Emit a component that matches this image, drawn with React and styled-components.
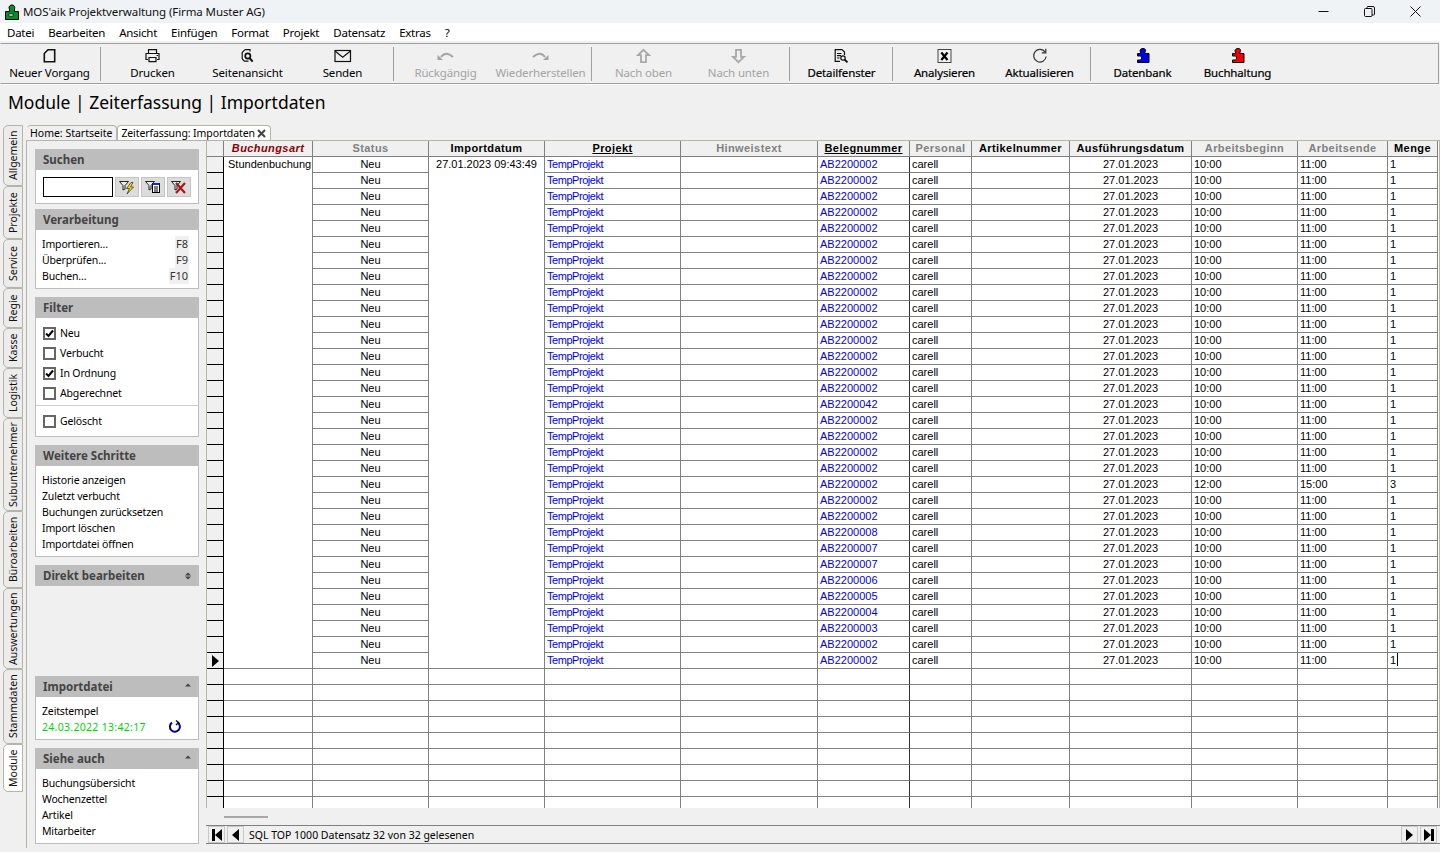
import React from 'react';
import styled, { createGlobalStyle } from 'styled-components';

const UI_FONT = '"Noto Sans", "Open Sans", sans-serif';
const GRID_FONT = '"Liberation Sans", Arial, sans-serif';

const GlobalStyle = createGlobalStyle`
  html, body { margin: 0; padding: 0; height: 100%; overflow: hidden; }
  body { background: #f0f0f0; font-family: ${UI_FONT}; color: #000; }
  #root { height: 100%; }
`;

const Win = styled.div`
  height: 852px;
  display: flex;
  flex-direction: column;
  overflow: hidden;
`;

const TitleBar = styled.div`
  height: 23px;
  flex: none;
  background: #eff3f5;
  display: flex;
  align-items: center;
  padding-left: 4px;
  font-size: 11.5px;
  letter-spacing: -0.1px;
  color: #111;
`;

const AppName = styled.span`
  margin-left: 3px;
  flex: 1;
`;

const WinButtons = styled.div`
  display: flex;
  height: 100%;
  margin-right: 2px;
`;

const WinButton = styled.div`
  width: 46px;
  display: flex;
  align-items: center;
  justify-content: center;
`;

const MenuBar = styled.div`
  height: 18px;
  flex: none;
  background: #fff;
  display: flex;
  align-items: center;
  padding-left: 7px;
  gap: 14px;
  font-size: 11.5px;
  letter-spacing: -0.25px;
  margin-bottom: 2px;
`;

const Toolbar = styled.div`
  height: 39px;
  flex: none;
  display: flex;
  align-items: stretch;
  border: 1px solid #a0a0a0;
  border-left-color: #f0f0f0;
  padding-left: 1px;
  box-shadow: 0 1px 0 #fff;
  margin-right: 1px;
`;

const ToolButton = styled.div`
  width: 95px;
  flex: none;
  display: flex;
  flex-direction: column;
  align-items: center;
  padding-top: 3px;
  font-size: 11.5px;
  line-height: 16px;
  letter-spacing: -0.15px;
  color: ${p => (p.$off ? '#a3a3a3' : '#000')};
  white-space: nowrap;
  -webkit-text-stroke: ${p => (p.$strong ? '0.2px #000' : '0')};
`;

const ToolIcon = styled.div`
  height: 18px;
  display: flex;
  align-items: flex-start;
`;

const ToolSep = styled.div`
  width: 1px;
  flex: none;
  margin: 3px 4px 2px 3px;
  background: #a0a0a0;
`;

const PageTitle = styled.h1`
  height: 41px;
  flex: none;
  margin: 0;
  padding: 5px 0 0 8px;
  box-sizing: border-box;
  font-weight: 400;
  font-size: 17.5px;
  line-height: 27px;
`;

const Main = styled.div`
  flex: 1;
  min-height: 0;
  display: flex;
`;

const Rail = styled.div`
  width: 23px;
  flex: none;
  display: flex;
  flex-direction: column;
  align-items: flex-end;
`;

const RailTab = styled.div`
  width: 20px;
  height: ${p => p.$h}px;
  box-sizing: border-box;
  writing-mode: vertical-rl;
  transform: rotate(180deg);
  display: flex;
  align-items: center;
  justify-content: center;
  font-size: 10.5px;
  background: ${p => (p.$active ? '#fff' : '#ececec')};
  border: 1px solid #b4b4a8;
  border-radius: 0 5px 5px 0;
  color: #111;
`;

const Work = styled.div`
  flex: 1;
  min-width: 0;
  display: flex;
  flex-direction: column;
  margin-left: 3px;
`;

const DocTabs = styled.div`
  height: 15px;
  flex: none;
  display: flex;
  align-items: flex-end;
  padding-left: 1px;
`;

const DocTab = styled.div`
  height: 15px;
  box-sizing: border-box;
  padding: ${p => (p.$active ? '0 4px 0 3px' : '0 4px 0 3px')};
  display: flex;
  align-items: center;
  gap: 2px;
  font-size: 10.5px;
  letter-spacing: ${p => (p.$active ? '-0.1px' : '0')};
  background: ${p => (p.$active ? '#fff' : '#f0f0f0')};
  border: 1px solid #b4b4a8;
  border-bottom: none;
  border-left-width: ${p => (p.$active ? 1 : 0)}px;
  border-radius: 4px 4px 0 0;
`;

const Pane = styled.div`
  flex: 1;
  min-height: 0;
  display: flex;
  border-top: 1px solid #b4b4a8;
  border-left: 1px solid #b4b4a8;
  margin-bottom: 4px;
`;

const Side = styled.div`
  width: 180px;
  flex: none;
  box-sizing: border-box;
  padding: 8px 8px 4px 8px;
  display: flex;
  flex-direction: column;
  gap: 8px;
`;

const SideGap = styled.div`
  flex: 1;
`;

const Panel = styled.section`
  width: 164px;
  margin-bottom: ${p => (p.$tight ? -3 : 0)}px;
`;

const PanelHead = styled.div`
  height: 21px;
  box-sizing: border-box;
  background: #bdbdbd;
  color: #444;
  font-weight: 700;
  font-size: 11.5px;
  padding: 0 8px;
  display: flex;
  align-items: center;
  justify-content: space-between;
`;

const PanelBody = styled.div`
  background: #fff;
  border: 1px solid #bdbdbd;
  border-top: none;
  padding: ${p => p.$pad || '6px 7px 4px 6px'};
  font-size: 10.5px;
  line-height: 16px;
  letter-spacing: -0.15px;
`;

const SearchRow = styled.div`
  display: flex;
  gap: 2px;
`;

const SearchInput = styled.div`
  width: 70px;
  height: 20px;
  box-sizing: border-box;
  border: 1px solid #000;
  background: #fff;
`;

const FilterBtn = styled.div`
  width: 24px;
  height: 20px;
  box-sizing: border-box;
  background: #dcdcdc;
  border: 1px solid;
  border-color: #f4f4f4 #8c8c8c #8c8c8c #f4f4f4;
  outline: 1px solid #c4c4c4;
  outline-offset: -1px;
  display: flex;
  align-items: center;
  justify-content: center;
`;

const KeyRow = styled.div`
  display: flex;
  justify-content: space-between;
  height: 16px;
  margin-right: 2px;
`;

const KeyHint = styled.span`
  background: #f0f0f0;
  color: #333;
  padding: 0 1px;
  font-size: 11px;
  letter-spacing: 0;
`;

const CheckRow = styled.label`
  display: flex;
  align-items: center;
  gap: 4px;
  height: 20px;
  padding-left: 1px;
`;

const CheckBox = styled.span`
  width: 13px;
  height: 13px;
  box-sizing: border-box;
  border: 2px solid #666;
  background: #fff;
  display: flex;
  align-items: center;
  justify-content: center;
`;

const Divider = styled.div`
  border-top: 1px solid #d0d0d0;
  margin: 2px -7px 5px -6px;
`;

const StampRow = styled.div`
  display: flex;
  justify-content: space-between;
  align-items: center;
  color: #00d400;
  letter-spacing: 0.3px;
  padding-right: 9px;
`;

const GridArea = styled.div`
  flex: 1;
  min-width: 0;
  display: flex;
  flex-direction: column;
`;

const GridClip = styled.div`
  height: 667px;
  flex: none;
  overflow: hidden;
  background: #fff;
  border-left: 1px solid #b4b4a8;
  border-right: 1px solid #b4b4a8;
  margin-left: -1px;
`;

const Table = styled.table`
  table-layout: fixed;
  width: 1231px;
  border-collapse: separate;
  border-spacing: 0;
  font-family: ${GRID_FONT};
  font-size: 11px;
  color: #000;
`;

const Th = styled.th`
  height: 15px;
  padding: 0 2px;
  background: #f0f0f0;
  border-right: 1px solid #808080;
  border-bottom: 1px solid #808080;
  font-size: 11px;
  line-height: 13px;
  font-weight: 700;
  font-style: ${p => (p.$kind === 'key' ? 'italic' : 'normal')};
  letter-spacing: 0.42px;
  color: ${p => (p.$kind === 'key' ? '#8b0000' : p.$kind === 'off' ? '#808080' : '#000')};
  text-decoration: ${p => (p.$kind === 'link' ? 'underline' : 'none')};
  white-space: nowrap;
  overflow: hidden;
`;

const RowHead = styled.td`
  height: 15px;
  padding: 0;
  background: #f0f0f0;
  border-right: 1px solid #000;
  border-bottom: 1px solid #000;
  text-align: center;
  vertical-align: middle;
  line-height: 0;
`;

const Td = styled.td`
  height: 15px;
  padding: 0 0 0 ${p => (p.$center ? 0 : 2)}px;
  border-right: 1px solid ${p => (p.$dark ? '#333' : '#808080')};
  border-bottom: 1px solid #808080;
  line-height: 15px;
  letter-spacing: ${p => (p.$squeeze ? '-0.45px' : 'normal')};
  text-align: ${p => (p.$center ? 'center' : 'left')};
  color: ${p => (p.$link ? '#0000ee' : '#000')};
  white-space: nowrap;
  overflow: hidden;
  vertical-align: top;
`;

const MergedTd = styled(Td)`
  padding-left: ${p => (p.$center ? 0 : 4)}px;
`;

const Caret = styled.span`
  display: inline-block;
  width: 1px;
  height: 13px;
  margin-left: 1px;
  background: #000;
  vertical-align: -2px;
`;

const ScrollTrack = styled.div`
  height: 17px;
  flex: none;
  box-sizing: border-box;
  padding: 8px 0 0 17px;
`;

const ScrollThumb = styled.div`
  width: 44px;
  height: 2px;
  background: #a8a8a8;
`;

const NavBar = styled.div`
  height: 19px;
  flex: none;
  box-sizing: border-box;
  border-top: 1px solid #808080;
  border-bottom: 1px solid #808080;
  margin-left: -1px;
  display: flex;
  align-items: center;
  gap: 2px;
  padding: 0 3px 0 2px;
  font-size: 10.5px;
`;

const NavBtn = styled.div`
  width: 17px;
  height: 17px;
  box-sizing: border-box;
  background: #f0f0f0;
  border: 1px solid #c8c8c8;
  display: flex;
  align-items: center;
  justify-content: center;
`;

const NavText = styled.span`
  flex: 1;
  margin-left: 3px;
`;

const Stroke = ({ children, color = '#111', sw = 1.2 }) => (
  <svg width="20" height="18" viewBox="0 0 20 18" fill="none" stroke={color} strokeWidth={sw}>
    {children}
  </svg>
);

const Puzzle = ({ color }) => (
  <svg width="16" height="16" viewBox="0 0 16 16">
    <path
      d="M2.5 6.5H5.5V5C4.5 4 5 1.5 8 1.5S11 4 10 5V6.5H14V15.5H2.5V13H5.5L6.5 12V10L5.5 9H2.5Z"
      fill={color}
      stroke="#000"
    />
    <rect x="3" y="10" width="3" height="2" fill="#fff" />
  </svg>
);

const iconFor = {
  doc: (
    <Stroke sw={1.6}>
      <path d="M8 2.8H14.7V14.7H4.3V6.5Z" />
    </Stroke>
  ),
  print: (
    <Stroke>
      <path d="M5.5 6V2.6h8V6M5 12.5H3V6.5h13v6h-2" />
      <path d="M6 10.5h7v4.2H6Z" />
      <path d="M13.5 8.5h1.5" />
    </Stroke>
  ),
  preview: (
    <Stroke>
      <path d="M7 2.6h5v2M4.2 12V5.5L7 2.6M4.2 12l2.3 2.2h4" />
      <circle cx="9.8" cy="9" r="2.6" strokeWidth="1.7" />
      <path d="M11.6 11l3 3.7" strokeWidth="2" />
    </Stroke>
  ),
  mail: (
    <Stroke>
      <rect x="2" y="3.5" width="15.5" height="11" />
      <path d="M2 4l7.7 6.2L17.5 4" />
    </Stroke>
  ),
  undo: (
    <Stroke color="#a3a3a3" sw={2}>
      <path d="M5 10C8 5.5 12.5 5.5 17 10" />
      <path d="M1.5 8l5.5 5H1.5Z" fill="#a3a3a3" stroke="none" />
    </Stroke>
  ),
  redo: (
    <Stroke color="#a3a3a3" sw={2}>
      <path d="M14 10C11 5.5 6.5 5.5 2 10" />
      <path d="M17.5 8L12 13h5.5Z" fill="#a3a3a3" stroke="none" />
    </Stroke>
  ),
  up: (
    <Stroke color="#a8a8a8" sw={1.8}>
      <path d="M9.5 2.8l5.5 5.4h-3v6.9H7V8.2H4Z" />
    </Stroke>
  ),
  down: (
    <Stroke color="#a8a8a8" sw={1.8}>
      <path d="M9.5 15.2l5.5-5.4h-3V2.9H7v6.9H4Z" />
    </Stroke>
  ),
  detail: (
    <Stroke>
      <path d="M12.5 8V5L10 2.6H3.2v11.8H8" />
      <path d="M5 6.5h4.5M5 8.7h4M5 11h2.5" />
      <circle cx="11" cy="11" r="2.2" />
      <path d="M12.5 12.5l3 2.8" strokeWidth="1.8" />
    </Stroke>
  ),
  analyse: (
    <Stroke color="#444" sw={1}>
      <rect x="3" y="2.5" width="13" height="13" />
      <path d="M6.3 5.5l6.2 7.5M12.5 5.5L6.3 13" stroke="#000" strokeWidth="2.2" />
    </Stroke>
  ),
  refresh: (
    <Stroke color="#333">
      <path d="M15.2 5.2A6.3 6.3 0 1 0 16.2 9.5" />
      <path d="M15.8 1.8v4h-4" />
    </Stroke>
  ),
  dbBlue: <Puzzle color="#0000f0" />,
  dbRed: <Puzzle color="#f00000" />,
};

const tools = [
  [{ label: 'Neuer Vorgang', icon: 'doc' }],
  [
    { label: 'Drucken', icon: 'print' },
    { label: 'Seitenansicht', icon: 'preview' },
    { label: 'Senden', icon: 'mail' },
  ],
  [
    { label: 'Rückgängig', icon: 'undo', off: true },
    { label: 'Wiederherstellen', icon: 'redo', off: true },
  ],
  [
    { label: 'Nach oben', icon: 'up', off: true },
    { label: 'Nach unten', icon: 'down', off: true },
  ],
  [{ label: 'Detailfenster', icon: 'detail', strong: true }],
  [
    { label: 'Analysieren', icon: 'analyse', strong: true },
    { label: 'Aktualisieren', icon: 'refresh', strong: true },
  ],
  [
    { label: 'Datenbank', icon: 'dbBlue', strong: true },
    { label: 'Buchhaltung', icon: 'dbRed', strong: true },
  ],
];

const menus = ['Datei', 'Bearbeiten', 'Ansicht', 'Einfügen', 'Format', 'Projekt', 'Datensatz', 'Extras', '?'];

const railTabs = [
  ['Allgemein', 61], ['Projekte', 53], ['Service', 49], ['Regie', 40], ['Kasse', 40], ['Logistik', 50],
  ['Subunternehmer', 93], ['Büroarbeiten', 77], ['Auswertungen', 81], ['Stammdaten', 75], ['Module', 48, true],
];

const columns = [
  { title: '', width: 17 },
  { title: 'Buchungsart', width: 89, kind: 'key' },
  { title: 'Status', width: 116, kind: 'off' },
  { title: 'Importdatum', width: 116 },
  { title: 'Projekt', width: 136, kind: 'link' },
  { title: 'Hinweistext', width: 137, kind: 'off' },
  { title: 'Belegnummer', width: 92, kind: 'link' },
  { title: 'Personal', width: 62, kind: 'off' },
  { title: 'Artikelnummer', width: 98 },
  { title: 'Ausführungsdatum', width: 122 },
  { title: 'Arbeitsbeginn', width: 106, kind: 'off' },
  { title: 'Arbeitsende', width: 90, kind: 'off' },
  { title: 'Menge', width: 50 },
];

const belegFor = i => {
  if (i === 15) return 'AB2200042';
  const tail = { 23: '8', 24: '7', 25: '7', 26: '6', 27: '5', 28: '4', 29: '3' };
  return `AB220000${tail[i] || '2'}`;
};

const rows = Array.from({ length: 32 }, (_, i) => ({
  beleg: belegFor(i),
  start: i === 20 ? '12:00' : '10:00',
  end: i === 20 ? '15:00' : '11:00',
  qty: i === 20 ? '3' : '1',
}));

const Triangle = ({ flip }) => (
  <svg width="7" height="12" viewBox="0 0 7 12">
    <path d={flip ? 'M7 0V12L0 6Z' : 'M0 0V12L7 6Z'} fill="#000" />
  </svg>
);

const EdgeArrow = ({ flip }) => (
  <svg width="10" height="12" viewBox="0 0 10 12">
    <path d={flip ? 'M0 0V12L7 6Z' : 'M10 0V12L3 6Z'} fill="#000" />
    <rect x={flip ? 7 : 0} width="3" height="12" fill="#000" />
  </svg>
);

const Check = ({ on, children }) => (
  <CheckRow>
    <CheckBox>
      {on && (
        <svg width="9" height="9" viewBox="0 0 9 9">
          <path d="M1 4.5l2.5 2.5L8 1.5" fill="none" stroke="#000" strokeWidth="2" />
        </svg>
      )}
    </CheckBox>
    {children}
  </CheckRow>
);

const Funnel = ({ children }) => (
  <svg width="20" height="16" viewBox="0 0 20 16">
    <path d="M2.5 2.5h9L8 6.5v3.5l-2 1V6.5Z" fill="#eef0e8" stroke="#222" />
    {children}
  </svg>
);

const Updown = ({ up, down }) => (
  <svg width="6" height="8" viewBox="0 0 6 8">
    {up && <path d="M0 3.5L3 .5l3 3Z" fill="#444" />}
    {down && <path d="M0 4.5l3 3 3-3Z" fill="#444" />}
  </svg>
);

export default function App() {
  return (
    <Win>
      <GlobalStyle />
      <TitleBar>
        <svg width="16" height="16" viewBox="0 0 16 16">
          <path
            d="M1.5 7.5H5.5V5C4.5 4 5 1 8 1S11 4 10.5 5V7.5H14.5V15.5H1.5Z"
            fill="#0a8a2a"
            stroke="#000"
          />
          <rect x="5" y="10" width="4" height="2" fill="#fff" stroke="#000" strokeWidth=".6" />
        </svg>
        <AppName>MOS'aik Projektverwaltung (Firma Muster AG)</AppName>
        <WinButtons>
          <WinButton>
            <svg width="11" height="11" viewBox="0 0 11 11">
              <path d="M.5 5.5h10" stroke="#111" />
            </svg>
          </WinButton>
          <WinButton>
            <svg width="11" height="11" viewBox="0 0 11 11" fill="none" stroke="#111">
              <rect x=".5" y="2.5" width="7.5" height="8" rx="1" />
              <path d="M3 2.5V1.5Q3 .5 4 .5h5Q10.5 .5 10.5 2v6q0 1-1 1H8" />
            </svg>
          </WinButton>
          <WinButton>
            <svg width="11" height="11" viewBox="0 0 11 11">
              <path d="M.5.5l10 10M10.5.5l-10 10" stroke="#111" />
            </svg>
          </WinButton>
        </WinButtons>
      </TitleBar>

      <MenuBar>
        {menus.map(m => (
          <span key={m}>{m}</span>
        ))}
      </MenuBar>

      <Toolbar>
        {tools.map((group, g) => (
          <React.Fragment key={g}>
            {g > 0 && <ToolSep />}
            {group.map(t => (
              <ToolButton key={t.label} $off={t.off} $strong={t.strong}>
                <ToolIcon>{iconFor[t.icon]}</ToolIcon>
                {t.label}
              </ToolButton>
            ))}
          </React.Fragment>
        ))}
      </Toolbar>

      <PageTitle>Module | Zeiterfassung | Importdaten</PageTitle>

      <Main>
        <Rail>
          {railTabs.map(([label, h, active]) => (
            <RailTab key={label} $h={h} $active={active}>
              {label}
            </RailTab>
          ))}
        </Rail>

        <Work>
          <DocTabs>
            <DocTab>Home: Startseite</DocTab>
            <DocTab $active>
              Zeiterfassung: Importdaten
              <svg width="9" height="9" viewBox="0 0 9 9">
                <path d="M1 1l7 7M8 1L1 8" stroke="#444" strokeWidth="2" />
              </svg>
            </DocTab>
          </DocTabs>

          <Pane>
            <Side>
              <Panel $tight>
                <PanelHead>Suchen</PanelHead>
                <PanelBody $pad="7px 7px 6px 7px">
                  <SearchRow>
                    <SearchInput />
                    <FilterBtn>
                      <Funnel>
                        <path d="M14 3.5L9.5 9.5h3L10 15l6.5-7h-3l2.5-4.5Z" fill="#ffe600" stroke="#222" strokeWidth=".7" />
                      </Funnel>
                    </FilterBtn>
                    <FilterBtn>
                      <Funnel>
                        <rect x="9.5" y="4.5" width="7" height="9" fill="#fff" stroke="#000" />
                        <path d="M9.5 5h7" stroke="#1030c0" strokeWidth="2" />
                        <path d="M11 8h4M11 10h4M11 12h4" stroke="#000" />
                      </Funnel>
                    </FilterBtn>
                    <FilterBtn>
                      <Funnel>
                        <path d="M7 4l9 10M16 4L7 14" stroke="#a81818" strokeWidth="2.2" />
                      </Funnel>
                    </FilterBtn>
                  </SearchRow>
                </PanelBody>
              </Panel>

              <Panel>
                <PanelHead>Verarbeitung</PanelHead>
                <PanelBody>
                  <KeyRow>Importieren...<KeyHint>F8</KeyHint></KeyRow>
                  <KeyRow>Überprüfen...<KeyHint>F9</KeyHint></KeyRow>
                  <KeyRow>Buchen...<KeyHint>F10</KeyHint></KeyRow>
                </PanelBody>
              </Panel>

              <Panel>
                <PanelHead>Filter</PanelHead>
                <PanelBody $pad="5px 7px 5px 6px">
                  <Check on>Neu</Check>
                  <Check>Verbucht</Check>
                  <Check on>In Ordnung</Check>
                  <Check>Abgerechnet</Check>
                  <Divider />
                  <Check>Gelöscht</Check>
                </PanelBody>
              </Panel>

              <Panel>
                <PanelHead>Weitere Schritte</PanelHead>
                <PanelBody>
                  <div>Historie anzeigen</div>
                  <div>Zuletzt verbucht</div>
                  <div>Buchungen zurücksetzen</div>
                  <div>Import löschen</div>
                  <div>Importdatei öffnen</div>
                </PanelBody>
              </Panel>

              <Panel>
                <PanelHead>
                  Direkt bearbeiten
                  <Updown up down />
                </PanelHead>
              </Panel>

              <SideGap />

              <Panel>
                <PanelHead>
                  Importdatei
                  <Updown up />
                </PanelHead>
                <PanelBody>
                  <div>Zeitstempel</div>
                  <StampRow>
                    24.03.2022 13:42:17
                    <svg width="14" height="14" viewBox="0 0 14 14" fill="none" stroke="#000080" strokeWidth="2">
                      <path d="M4 2.6A5 5 0 1 0 9.5 2.4" />
                      <path d="M8 .5l2.5 2-2.5 2.5" strokeWidth="1.4" />
                    </svg>
                  </StampRow>
                </PanelBody>
              </Panel>

              <Panel>
                <PanelHead>
                  Siehe auch
                  <Updown up />
                </PanelHead>
                <PanelBody>
                  <div>Buchungsübersicht</div>
                  <div>Wochenzettel</div>
                  <div>Artikel</div>
                  <div>Mitarbeiter</div>
                </PanelBody>
              </Panel>
            </Side>

            <GridArea>
              <GridClip>
                <Table>
                  <colgroup>
                    {columns.map(c => (
                      <col key={c.title} width={c.width} />
                    ))}
                  </colgroup>
                  <thead>
                    <tr>
                      {columns.map(c => (
                        <Th key={c.title} $kind={c.kind}>
                          {c.title}
                        </Th>
                      ))}
                    </tr>
                  </thead>
                  <tbody>
                    {rows.map((r, i) => (
                      <tr key={i}>
                        <RowHead>{i === 31 && <Triangle />}</RowHead>
                        {i === 0 && <MergedTd rowSpan={32}>Stundenbuchung</MergedTd>}
                        <Td $center>Neu</Td>
                        {i === 0 && (
                          <MergedTd rowSpan={32} $center>
                            27.01.2023 09:43:49
                          </MergedTd>
                        )}
                        <Td $link $squeeze>TempProjekt</Td>
                        <Td />
                        <Td $link $dark>{r.beleg}</Td>
                        <Td>carell</Td>
                        <Td />
                        <Td $center>27.01.2023</Td>
                        <Td>{r.start}</Td>
                        <Td>{r.end}</Td>
                        <Td>
                          {r.qty}
                          {i === 31 && <Caret />}
                        </Td>
                      </tr>
                    ))}
                    {Array.from({ length: 9 }, (_, i) => (
                      <tr key={`empty-${i}`}>
                        <RowHead />
                        {columns.slice(1).map((c, j) => (
                          <Td key={j} $dark={c.title === 'Belegnummer'} />
                        ))}
                      </tr>
                    ))}
                  </tbody>
                </Table>
              </GridClip>

              <ScrollTrack>
                <ScrollThumb />
              </ScrollTrack>

              <NavBar>
                <NavBtn><EdgeArrow /></NavBtn>
                <NavBtn><Triangle flip /></NavBtn>
                <NavText>SQL TOP 1000 Datensatz 32 von 32 gelesenen</NavText>
                <NavBtn><Triangle /></NavBtn>
                <NavBtn><EdgeArrow flip /></NavBtn>
              </NavBar>
            </GridArea>
          </Pane>
        </Work>
      </Main>
    </Win>
  );
}
